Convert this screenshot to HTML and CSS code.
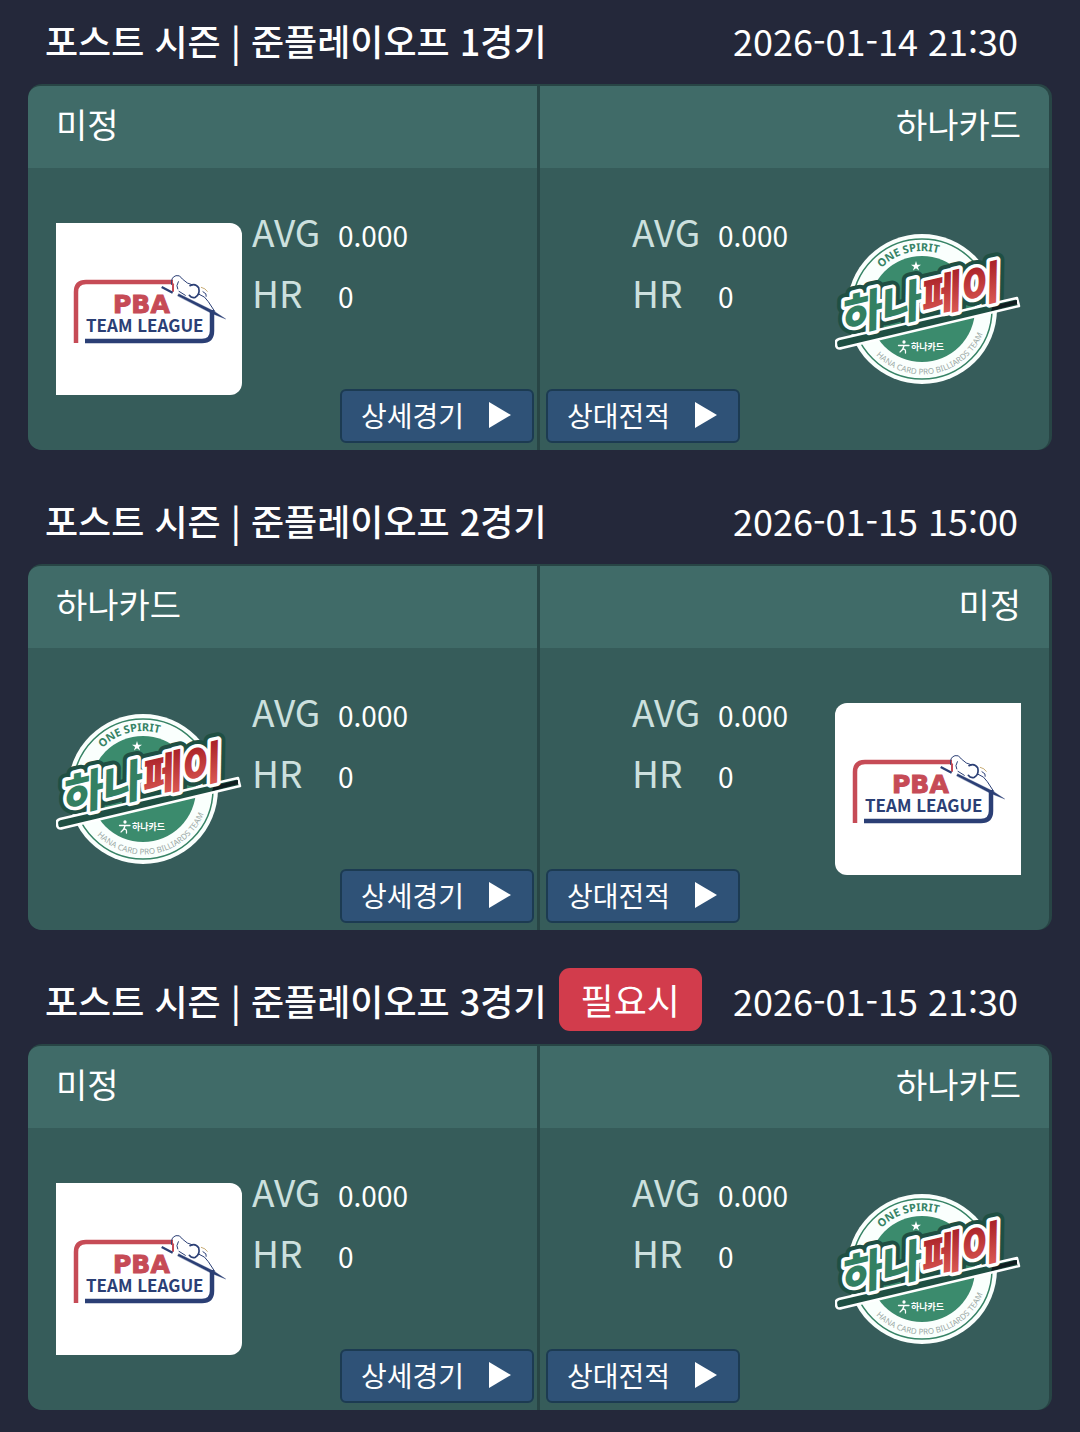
FILE: index.html
```html
<!DOCTYPE html>
<html lang="ko">
<head>
<meta charset="utf-8">
<meta name="viewport" content="width=device-width, initial-scale=1">
<title>포스트 시즌 일정</title>
<link rel="stylesheet" href="styles.css">
</head>
<body>
<svg class="sprite" aria-hidden="true">
  <defs>
    <linearGradient id="hana-red" x1="0" y1="0" x2="0" y2="1">
      <stop offset="0.2" stop-color="#a92027"/>
      <stop offset="0.9" stop-color="#dc5b55"/>
    </linearGradient>
    <path id="arc-top" d="M46.3 45 A58 58 0 0 1 128.3 45"/>
    <path id="arc-bottom" d="M41 132.300 A65.500 65.500 0 0 0 152.600 81"/>
    <symbol id="logo-pba" viewBox="0 0 186 172">
      <path d="M20 120V69Q20 59 30 59H117" fill="none" stroke="#c64b56" stroke-width="4.500"/>
      <path d="M29 118H146Q156 118 156 108V87" fill="none" stroke="#2b3f75" stroke-width="4.500"/>
      <text class="pba-name" x="57" y="90">PBA</text>
      <text class="pba-league" x="30" y="109">TEAM LEAGUE</text>
      <g transform="translate(89 42) scale(.3333)" fill="none" stroke="#2b3f75" stroke-linecap="round">
        <path d="M80 59Q76 37 93 32Q104 28 112 42Q126 57 143 60" stroke-width="3"/>
        <path d="M84 58V78" stroke="#c64b56" stroke-width="6"/>
        <path d="M100 50Q92 63 98 72M102 79L121 91" stroke-width="3"/>
        <path d="M135 62Q151 53 161 68Q166 88 151 97Q139 100 133 91" stroke-width="5"/>
        <path d="M163 88Q181 94 190 110L209 139M174 80Q187 86 184 94" stroke-width="3"/>
        <path d="M169 67Q182 70 187 79" stroke="#c8ad75" stroke-width="3"/>
        <path d="M50 66L83 83" stroke-width="7" stroke-linecap="butt"/>
        <path d="M98 92L101 86L206 138L242 162L202 146Z" fill="#2b3f75" stroke-width="1"/>
      </g>
    </symbol>
    <symbol id="logo-hana" viewBox="0 0 186 172">
      <circle cx="87" cy="86" r="75" fill="#fafffd"/>
      <circle cx="87" cy="86" r="70" fill="none" stroke="#368365" stroke-width="1.500"/>
      <circle cx="87" cy="86" r="53" fill="#3b8b6d"/>
      <text class="hana-spirit"><textPath href="#arc-top">ONE SPIRIT</textPath></text>
      <text class="hana-team"><textPath href="#arc-bottom">HANA CARD PRO BILLIARDS TEAM</textPath></text>
      <path d="M81 38l1.200 3.700h3.800l-3.100 2.200 1.200 3.700-3.100-2.300-3.100 2.300 1.200-3.700-3.100-2.200h3.800z" fill="#fff"/>
      <g transform="rotate(-13 10 107)">
        <text class="hana-word hana-shadow" x="7" y="110">하나페이</text>
      </g>
      <path d="M4 116L182 75L184 83L7 125Q1 127 1 121Q0 117 4 116Z" fill="#1f4f43" stroke="#fff" stroke-width="2.500" stroke-linejoin="round"/>
      <path d="M158 83L182 77V81L156 88Z" fill="#101d20"/>
      <g transform="rotate(-13 10 107)">
        <text class="hana-word hana-outline" x="7" y="110">하나페이</text>
        <text class="hana-word" x="7" y="110"><tspan fill="#338062">하나</tspan><tspan fill="url(#hana-red)">페이</tspan></text>
      </g>
      <g fill="none" stroke="#fff" stroke-width="1.300" stroke-linecap="round">
        <circle cx="69" cy="119" r="1" fill="#fff"/>
        <path d="M63.500 122.500H74M69 123Q68 127 65 129M67.500 126.500Q71 125 70.500 130"/>
      </g>
      <text class="hana-card" x="76" y="127">하나카드</text>
    </symbol>
  </defs>
</svg>

<main class="schedule">
  <article class="match">
    <header class="match-head">
      <h2 class="match-title">포스트 시즌 | 준플레이오프 1경기</h2>
      <time class="match-time" datetime="2026-01-14T21:30">2026-01-14 21:30</time>
    </header>
    <div class="card">
      <section class="side home">
        <h3 class="team">미정</h3>
        <div class="side-body">
          <svg class="logo logo-plate" role="img" aria-label="PBA TEAM LEAGUE"><use href="#logo-pba"/></svg>
          <div class="info">
            <dl class="stats"><dt>AVG</dt><dd>0.000</dd><dt>HR</dt><dd>0</dd></dl>
            <button class="action" type="button">상세경기<svg class="arrow" viewBox="0 0 22 26" aria-hidden="true"><path d="M0 0L22 13L0 26Z"/></svg></button>
          </div>
        </div>
      </section>
      <section class="side away">
        <h3 class="team">하나카드</h3>
        <div class="side-body">
          <svg class="logo" role="img" aria-label="하나카드"><use href="#logo-hana"/></svg>
          <div class="info">
            <dl class="stats"><dt>AVG</dt><dd>0.000</dd><dt>HR</dt><dd>0</dd></dl>
            <button class="action" type="button">상대전적<svg class="arrow" viewBox="0 0 22 26" aria-hidden="true"><path d="M0 0L22 13L0 26Z"/></svg></button>
          </div>
        </div>
      </section>
    </div>
  </article>

  <article class="match">
    <header class="match-head">
      <h2 class="match-title">포스트 시즌 | 준플레이오프 2경기</h2>
      <time class="match-time" datetime="2026-01-15T15:00">2026-01-15 15:00</time>
    </header>
    <div class="card">
      <section class="side home">
        <h3 class="team">하나카드</h3>
        <div class="side-body">
          <svg class="logo" role="img" aria-label="하나카드"><use href="#logo-hana"/></svg>
          <div class="info">
            <dl class="stats"><dt>AVG</dt><dd>0.000</dd><dt>HR</dt><dd>0</dd></dl>
            <button class="action" type="button">상세경기<svg class="arrow" viewBox="0 0 22 26" aria-hidden="true"><path d="M0 0L22 13L0 26Z"/></svg></button>
          </div>
        </div>
      </section>
      <section class="side away">
        <h3 class="team">미정</h3>
        <div class="side-body">
          <svg class="logo logo-plate" role="img" aria-label="PBA TEAM LEAGUE"><use href="#logo-pba"/></svg>
          <div class="info">
            <dl class="stats"><dt>AVG</dt><dd>0.000</dd><dt>HR</dt><dd>0</dd></dl>
            <button class="action" type="button">상대전적<svg class="arrow" viewBox="0 0 22 26" aria-hidden="true"><path d="M0 0L22 13L0 26Z"/></svg></button>
          </div>
        </div>
      </section>
    </div>
  </article>

  <article class="match">
    <header class="match-head">
      <h2 class="match-title">포스트 시즌 | 준플레이오프 3경기</h2>
      <span class="badge">필요시</span>
      <time class="match-time" datetime="2026-01-15T21:30">2026-01-15 21:30</time>
    </header>
    <div class="card">
      <section class="side home">
        <h3 class="team">미정</h3>
        <div class="side-body">
          <svg class="logo logo-plate" role="img" aria-label="PBA TEAM LEAGUE"><use href="#logo-pba"/></svg>
          <div class="info">
            <dl class="stats"><dt>AVG</dt><dd>0.000</dd><dt>HR</dt><dd>0</dd></dl>
            <button class="action" type="button">상세경기<svg class="arrow" viewBox="0 0 22 26" aria-hidden="true"><path d="M0 0L22 13L0 26Z"/></svg></button>
          </div>
        </div>
      </section>
      <section class="side away">
        <h3 class="team">하나카드</h3>
        <div class="side-body">
          <svg class="logo" role="img" aria-label="하나카드"><use href="#logo-hana"/></svg>
          <div class="info">
            <dl class="stats"><dt>AVG</dt><dd>0.000</dd><dt>HR</dt><dd>0</dd></dl>
            <button class="action" type="button">상대전적<svg class="arrow" viewBox="0 0 22 26" aria-hidden="true"><path d="M0 0L22 13L0 26Z"/></svg></button>
          </div>
        </div>
      </section>
    </div>
  </article>
</main>
</body>
</html>
```
FILE: styles.css
```css
* {
  box-sizing: border-box;
}

body {
  margin: 0;
  background: #24283a;
  color: #fff;
  font-family: "Noto Sans CJK KR", "Noto Sans", sans-serif;
  font-size: 36px;
}

h2, h3, dl, dd {
  margin: 0;
}

.sprite {
  display: block;
  width: 0;
  height: 0;
}

.schedule {
  display: flex;
  flex-direction: column;
  gap: 30px;
  padding: 0 28px 22px;
}

.match-head {
  display: flex;
  align-items: center;
  gap: 12px;
  height: 84px;
  padding: 0 34px 5px 17px;
}

.match-title {
  font-size: 36px;
  font-weight: 500;
  white-space: nowrap;
}

.match-time {
  margin-left: auto;
  white-space: nowrap;
}

.badge {
  padding: 0 22px;
  border-radius: 11px;
  background: #d23c4c;
  line-height: 63px;
  white-space: nowrap;
}

.card {
  display: grid;
  grid-template-columns: 1fr 1fr;
  overflow: hidden;
  border-radius: 14px;
  background: #284545;
}

.side {
  padding: 2px 3px 0 0;
}

.team {
  padding: 0 28px 6px;
  background: #406b68;
  border-radius: 12px 0 0 0;
  font-size: 34px;
  font-weight: 400;
  line-height: 76px;
}

.away .team {
  border-radius: 0 12px 0 0;
  text-align: right;
}

.side-body {
  display: flex;
  align-items: center;
  height: 282px;
  padding-left: 28px;
  background: #365c5a;
}

.away .side-body {
  flex-direction: row-reverse;
  padding: 0 28px 0 0;
}

.home .side-body {
  border-radius: 0 0 0 12px;
}

.away .side-body {
  border-radius: 0 0 12px 0;
}

.logo {
  flex: none;
  width: 186px;
  height: 172px;
}

.logo-plate {
  border-radius: 0 12px 12px 0;
  background: #fff;
}

.away .logo-plate {
  border-radius: 12px 0 0 12px;
}

.info {
  display: flex;
  flex: 1;
  flex-direction: column;
  justify-content: space-between;
  align-self: stretch;
  padding: 33px 3px 7px 10px;
}

.away .info {
  padding: 33px 0 7px 6px;
}

.stats {
  display: grid;
  grid-template-columns: 70px 100px;
  grid-auto-rows: 61px;
  align-items: baseline;
  column-gap: 16px;
  line-height: 61px;
}

.away .stats {
  align-self: flex-end;
  padding-right: 17px;
}

.stats dt {
  color: #cde0de;
  font-size: 37px;
}

.stats dd {
  font-size: 28px;
}

.action {
  display: flex;
  align-items: center;
  align-self: flex-end;
  justify-content: space-between;
  width: 194px;
  height: 54px;
  padding: 0 21px 2px 19px;
  border: 2px solid #1c3b52;
  border-radius: 6px;
  background: #2f5277;
  color: #fff;
  font: 28px "Noto Sans CJK KR", sans-serif;
  white-space: nowrap;
}

.away .action {
  align-self: flex-start;
}

.arrow {
  width: 22px;
  height: 26px;
  fill: #fff;
}

.pba-name {
  fill: #c64b56;
  stroke: #c64b56;
  stroke-width: 1px;
  font: bold 25px "DejaVu Sans", sans-serif;
}

.pba-league {
  fill: #2b3f75;
  font: bold 17px "Noto Sans CJK KR", sans-serif;
}

.hana-spirit {
  fill: #368365;
  font: bold 11px "Noto Sans", sans-serif;
}

.hana-team {
  fill: #9aa9a5;
  font: 8px "Noto Sans", sans-serif;
}

.hana-word {
  font: italic 900 44px "Noto Sans CJK KR", sans-serif;
  stroke-linejoin: round;
}

.hana-shadow {
  fill: #1f4f43;
  stroke: #1f4f43;
  stroke-width: 15px;
}

.hana-outline {
  fill: #fff;
  stroke: #fff;
  stroke-width: 7px;
}

.hana-card {
  fill: #fff;
  font: bold 9px "Noto Sans CJK KR", sans-serif;
}
```
